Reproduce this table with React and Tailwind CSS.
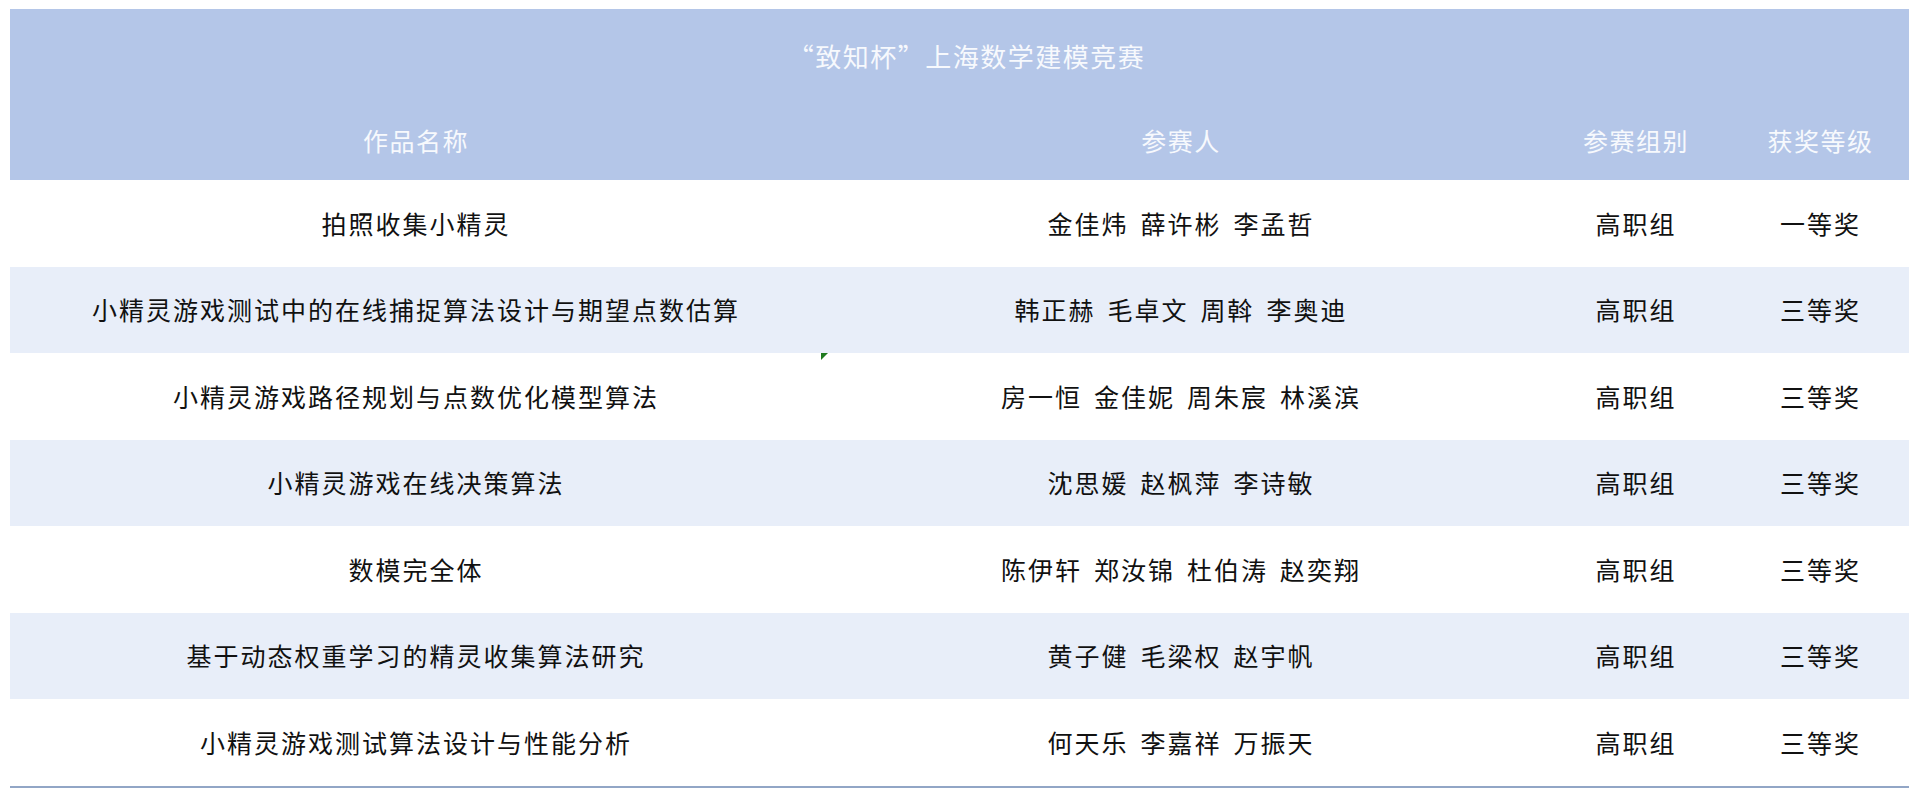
import React from "react";

const rows = [
    { title: "拍照收集小精灵", members: ["金佳炜", "薛许彬", "李孟哲"], group: "高职组", award: "一等奖" },
    { title: "小精灵游戏测试中的在线捕捉算法设计与期望点数估算", members: ["韩正赫", "毛卓文", "周斡", "李奥迪"], group: "高职组", award: "三等奖" },
    { title: "小精灵游戏路径规划与点数优化模型算法", members: ["房一恒", "金佳妮", "周朱宸", "林溪滨"], group: "高职组", award: "三等奖", mark: true },
    { title: "小精灵游戏在线决策算法", members: ["沈思媛", "赵枫萍", "李诗敏"], group: "高职组", award: "三等奖" },
    { title: "数模完全体", members: ["陈伊轩", "郑汝锦", "杜伯涛", "赵奕翔"], group: "高职组", award: "三等奖" },
    { title: "基于动态权重学习的精灵收集算法研究", members: ["黄子健", "毛梁权", "赵宇帆"], group: "高职组", award: "三等奖" },
    { title: "小精灵游戏测试算法设计与性能分析", members: ["何天乐", "李嘉祥", "万振天"], group: "高职组", award: "三等奖" },
];

const cols = "grid grid-cols-[812px_718px_192px_177px]";

export default function App() {
    return (
        <div
            className="min-h-screen bg-white pt-[9px] pl-[10px]"
            style={{ fontFamily: '"Noto Sans CJK SC", "Noto Sans", sans-serif' }}
        >
            <div className="w-[1899px]">
                <div className="bg-[#b4c6e8] text-[#f7f9fd]">
                    <div className="h-[92px] flex items-center justify-center text-[26px] tracking-[1.5px] pl-[14px]">
                        “致知杯”上海数学建模竞赛
                    </div>
                    <div className={`${cols} h-[79px] items-center text-[25px] tracking-[1.5px]`}>
                        <div className="text-center">作品名称</div>
                        <div className="text-center">参赛人</div>
                        <div className="text-center">参赛组别</div>
                        <div className="text-center">获奖等级</div>
                    </div>
                </div>
                <div className="border-b-2 border-[#92a6c6]">
                    {rows.map((row, i) => (
                        <div
                            key={i}
                            className={`${cols} h-[86.5px] items-center text-[25px] tracking-[2px] text-[#111] ${
                                i % 2 === 1 ? "bg-[#e8eef9]" : "bg-white"
                            }`}
                        >
                            <div className="relative h-full flex items-center justify-center">
                                {row.title}
                                {row.mark && (
                                    <span className="absolute top-0 right-[-6px] w-0 h-0 border-t-[7px] border-t-[#1f7a1f] border-r-[7px] border-r-transparent" />
                                )}
                            </div>
                            <div className="flex items-center justify-center gap-[12px]">
                                {row.members.map((m) => (
                                    <span key={m}>{m}</span>
                                ))}
                            </div>
                            <div className="text-center">{row.group}</div>
                            <div className="text-center">{row.award}</div>
                        </div>
                    ))}
                </div>
            </div>
        </div>
    );
}
